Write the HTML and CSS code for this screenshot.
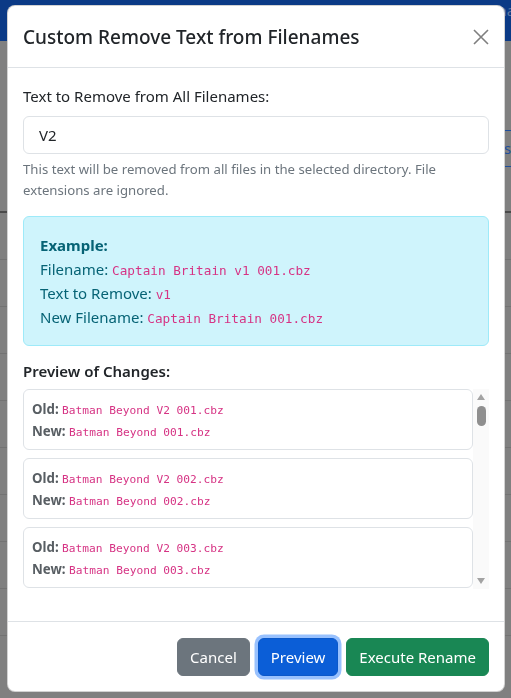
FILE: index.html
```html
<!DOCTYPE html>
<html lang="en">
<head>
<meta charset="utf-8">
<title>Custom Remove Text from Filenames</title>
<link rel="stylesheet" href="styles.css">
</head>
<body>
<div class="page">
  <nav class="navbar">
    <span class="nav-link">Home</span>
    <span class="nav-link">File Manager</span>
  </nav>
  <div class="toolbar">
    <span class="btn-outline">Files</span>
  </div>
  <div class="table">
    <div class="row head"></div>
    <div class="row"></div>
    <div class="row"></div>
    <div class="row"></div>
    <div class="row"></div>
    <div class="row"></div>
    <div class="row"></div>
    <div class="row"></div>
    <div class="row"></div>
    <div class="row"></div>
  </div>
</div>

<div class="modal" role="dialog">
  <div class="modal-header">
    <h5 class="modal-title">Custom Remove Text from Filenames</h5>
    <button class="btn-close" aria-label="Close">
      <svg width="16" height="16" viewBox="0 0 16 16"><path d="M1 1 L15 15 M15 1 L1 15" stroke="#7f7f7f" stroke-width="1.6" fill="none"/></svg>
    </button>
  </div>
  <div class="modal-body">
    <label class="form-label">Text to Remove from All Filenames:</label>
    <input class="form-control" type="text" value="V2">
    <div class="form-text">This text will be removed from all files in the selected directory. File extensions are ignored.</div>
    <div class="alert">
      <strong>Example:</strong><br>
      Filename: <code>Captain Britain v1 001.cbz</code><br>
      Text to Remove: <code>v1</code><br>
      New Filename: <code>Captain Britain 001.cbz</code>
    </div>
    <h6 class="preview-title">Preview of Changes:</h6>
    <div class="preview">
      <div class="preview-list">
        <div class="card"><div><strong>Old:</strong> <code>Batman Beyond V2 001.cbz</code></div><div><strong>New:</strong> <code>Batman Beyond 001.cbz</code></div></div>
        <div class="card"><div><strong>Old:</strong> <code>Batman Beyond V2 002.cbz</code></div><div><strong>New:</strong> <code>Batman Beyond 002.cbz</code></div></div>
        <div class="card"><div><strong>Old:</strong> <code>Batman Beyond V2 003.cbz</code></div><div><strong>New:</strong> <code>Batman Beyond 003.cbz</code></div></div>
        <div class="card"><div><strong>Old:</strong> <code>Batman Beyond V2 004.cbz</code></div><div><strong>New:</strong> <code>Batman Beyond 004.cbz</code></div></div>
        <div class="card"><div><strong>Old:</strong> <code>Batman Beyond V2 005.cbz</code></div><div><strong>New:</strong> <code>Batman Beyond 005.cbz</code></div></div>
        <div class="card"><div><strong>Old:</strong> <code>Batman Beyond V2 006.cbz</code></div><div><strong>New:</strong> <code>Batman Beyond 006.cbz</code></div></div>
      </div>
      <div class="scrollbar" aria-hidden="true">
        <span class="arrow-up"></span>
        <span class="thumb"></span>
        <span class="spacer"></span>
        <span class="arrow-down"></span>
      </div>
    </div>
  </div>
  <div class="modal-footer">
    <button class="btn btn-secondary">Cancel</button>
    <button class="btn btn-primary">Preview</button>
    <button class="btn btn-success">Execute Rename</button>
  </div>
</div>
</body>
</html>
```
FILE: styles.css
```css
* { box-sizing: border-box; }

html, body {
  margin: 0;
  height: 698px;
  overflow: hidden;
}

body {
  background: #808080;
  font-family: "Noto Sans", "Open Sans", sans-serif;
  font-size: 15px;
  line-height: 24px;
  color: #212529;
}

/* background page (under the backdrop) */
.navbar {
  height: 41px;
  background: #0b3a86;
  display: flex;
  justify-content: flex-end;
  gap: 18px;
  line-height: 18px;
  font-size: 15px;
  color: #5d76a3;
}
.nav-link { padding-top: 1px; }
.nav-link:last-child { margin-right: -28px; }

.toolbar {
  display: flex;
  justify-content: flex-end;
  padding-top: 89px;
  margin-right: -20px;
}
.btn-outline {
  height: 37px;
  width: 60px;
  border: 1px solid #1f4f9c;
  border-radius: 4px;
  color: #1f4f9c;
  line-height: 35px;
  padding-left: 8px;
}
.table { margin-top: 9px; }
.row {
  height: 47px;
  border-bottom: 1px solid #737373;
}
.row.head {
  height: 37px;
  border-bottom: 2px solid #4a4a4a;
}

/* modal */
.modal {
  position: fixed;
  top: 5px;
  left: 7px;
  width: 498px;
  background: #fff;
  border: 1px solid rgba(0, 0, 0, 0.175);
  border-radius: 8px;
}

.modal-header {
  display: flex;
  align-items: center;
  justify-content: space-between;
  padding: 16px 15px 15px;
  border-bottom: 1px solid #dee2e6;
}
.modal-title {
  margin: 0;
  font-size: 19px;
  line-height: 30px;
  font-weight: 500;
}
.btn-close {
  width: 16px;
  height: 16px;
  padding: 0;
  border: 0;
  background: none;
  display: flex;
}

.modal-body {
  padding: 16px 15px;
}
.form-label {
  display: block;
  margin-bottom: 8px;
}
.form-control {
  display: block;
  width: 100%;
  height: 38px;
  padding: 6px 15px;
  font: inherit;
  color: #212529;
  border: 1px solid #dee2e6;
  border-radius: 6px;
  outline: none;
}
.form-text {
  margin-top: 5px;
  margin-bottom: 15px;
  font-size: 13.2px;
  line-height: 21px;
  color: #6c757d;
}

.alert {
  background: #cff4fc;
  border: 1px solid #9eeaf9;
  border-radius: 6px;
  padding: 16px;
  color: #066375;
  margin-bottom: 16px;
}
.alert strong { font-weight: 700; }

code {
  font-family: "DejaVu Sans Mono", "Liberation Mono", monospace;
  font-size: 12.7px;
  line-height: 1;
  color: #d63384;
}

.preview-title {
  margin: 0 0 8px;
  font-size: 15px;
  line-height: 19px;
  font-weight: 600;
}

.preview {
  display: flex;
  height: 200px;
  margin-bottom: 16px;
}
.preview-list {
  flex: 1;
  overflow: hidden;
}
.card {
  border: 1px solid #dee2e6;
  border-radius: 6px;
  padding: 8px 8px 7px;
  margin-bottom: 8px;
  font-size: 13.3px;
  line-height: 22px;
}
.card strong {
  color: #585e63;
  font-weight: 700;
}
.card code { font-size: 11.2px; }

.scrollbar {
  width: 16px;
  background: #fafafa;
  display: flex;
  flex-direction: column;
  align-items: center;
}
.arrow-up {
  margin-top: 5px;
  width: 0;
  height: 0;
  border-left: 4.5px solid transparent;
  border-right: 4.5px solid transparent;
  border-bottom: 6px solid #a3a3a3;
}
.thumb {
  margin-top: 6px;
  width: 9px;
  height: 20px;
  border-radius: 4.5px;
  background: #8f8f8f;
}
.spacer { flex: 1; }
.arrow-down {
  margin-bottom: 5px;
  width: 0;
  height: 0;
  border-left: 4.5px solid transparent;
  border-right: 4.5px solid transparent;
  border-top: 6px solid #a3a3a3;
}

.modal-footer {
  display: flex;
  justify-content: flex-end;
  gap: 8px;
  padding: 16px 15px 15px;
  border-top: 1px solid #dee2e6;
}
.btn {
  height: 38px;
  padding: 0 12px;
  border: 1px solid transparent;
  border-radius: 6px;
  font: inherit;
  color: #fff;
  line-height: 36px;
}
.btn-secondary { background: #6c757d; border-color: #6c757d; }
.btn-primary {
  background: #0b5ed7;
  border-color: #0a58ca;
  box-shadow: 0 0 0 3.5px rgba(49, 132, 253, 0.5);
}
.btn-success { background: #198754; border-color: #198754; }
```
